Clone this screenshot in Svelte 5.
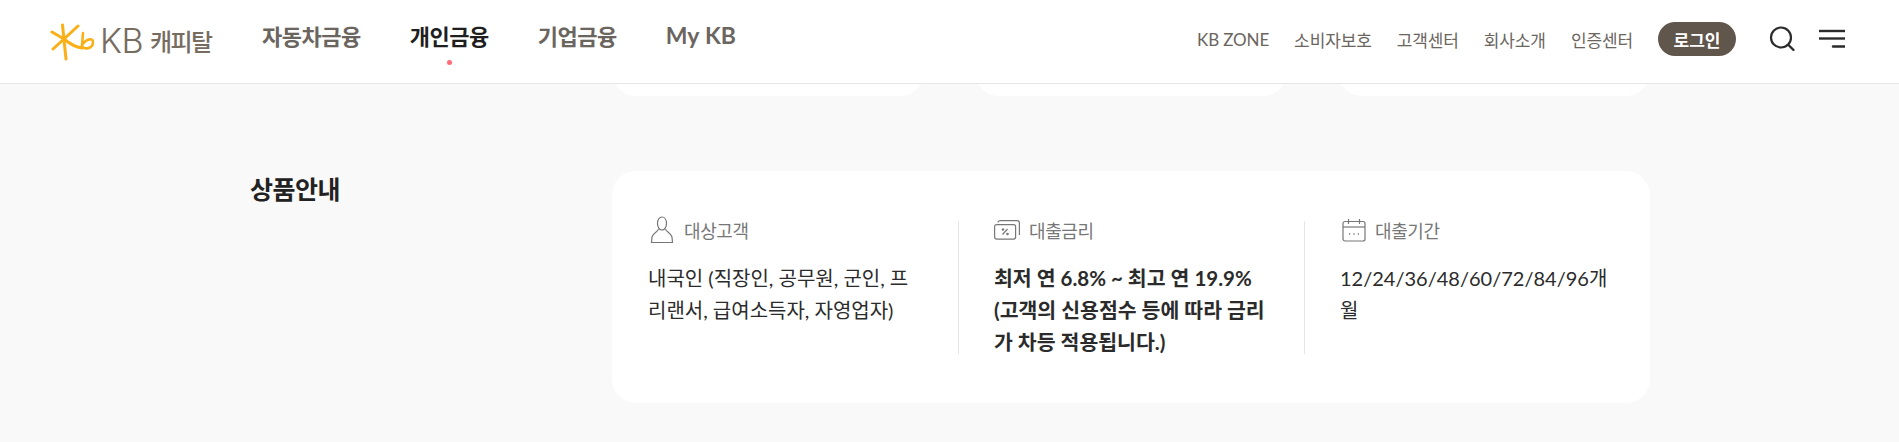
<script>
	const nav = [
		{ label: "자동차금융" },
		{ label: "개인금융", active: true },
		{ label: "기업금융" },
		{ label: "My KB", latin: true }
	];
	const util = ["KB ZONE", "소비자보호", "고객센터", "회사소개", "인증센터"];
</script>

<header class="header">
	<a class="logo" href="#home" aria-label="KB 캐피탈">
		<svg class="logo-mark" width="44" height="42" viewBox="0 0 44 42" fill="none" stroke="#fbaf17" stroke-linecap="round" stroke-linejoin="round">
			<path d="M12.5 5 L16 39" stroke-width="3" />
			<path d="M2 12 L14 19 L28 6" stroke-width="3" />
			<path d="M3 29 L14 19 C20 24 25 27 32 28" stroke-width="3" />
			<path d="M33 13 L32 26 C34 30 43 29 43 22 C43 18 37 18 32 25" stroke-width="2.6" />
		</svg>
		<span class="logo-kb">KB</span>
		<span class="logo-name">캐피탈</span>
	</a>

	<nav class="nav">
		{#each nav as item}
			<a class="nav-item" class:active={item.active} class:latin={item.latin} href="#menu">{item.label}</a>
		{/each}
	</nav>

	<div class="util">
		{#each util as item}
			<a class="util-item" href="#util">{item}</a>
		{/each}
		<button class="login" type="button">로그인</button>
		<svg class="search" width="28" height="28" viewBox="0 0 28 28" fill="none" stroke="#2b2b2b" stroke-linecap="round">
			<circle cx="13" cy="12.5" r="10" stroke-width="2.2" />
			<path d="M21 20.5 L25.5 25" stroke-width="2.4" />
		</svg>
		<svg class="menu" width="26" height="20" viewBox="0 0 26 20" fill="none" stroke="#2b2b2b" stroke-width="2.4">
			<path d="M0 2 H26" />
			<path d="M0 9.5 H26" />
			<path d="M14 17.5 H26" stroke-linecap="round" />
		</svg>
	</div>
</header>

<main class="page">
	<div class="stubs">
		<div class="stub"></div>
		<div class="stub"></div>
		<div class="stub"></div>
	</div>

	<section class="info">
		<h2 class="info-title">상품안내</h2>
		<div class="card">
			<div class="col">
				<div class="col-label">
					<svg class="icon-person" width="24" height="28" viewBox="0 0 24 28" fill="none" stroke="#777" stroke-width="1.2">
						<path d="M7.5 7.5 C7.5 3.5 9.5 1 12 1 C14.5 1 16.5 3.5 16.5 7.5 C16.5 11 14.5 14 12 14 C9.5 14 7.5 11 7.5 7.5 Z" />
						<path d="M8.5 13 C8 16 3 16.5 2 21 L1.5 26.5 H22.5 L22 21 C21 16.5 16 16 15.5 13" />
					</svg>
					<span>대상고객</span>
				</div>
				<p class="col-text">내국인 (직장인, 공무원, 군인, 프리랜서, 급여소득자, 자영업자)</p>
			</div>
			<div class="col">
				<div class="col-label">
					<svg class="icon-rate" width="26" height="20" viewBox="0 0 26 20" fill="none" stroke="#777" stroke-width="1.2">
						<rect x="0.6" y="4.6" width="21" height="14.5" rx="2" />
						<path d="M4 2.5 C4 1.3 5 0.7 6 0.7 H23 C24.5 0.7 25.4 1.6 25.4 3 V15" />
						<path d="M8.5 14.5 L13.5 9" />
						<circle cx="9" cy="9.5" r="0.7" />
						<circle cx="13.5" cy="14" r="0.7" />
					</svg>
					<span>대출금리</span>
				</div>
				<p class="col-text strong">최저 연 6.8% ~ 최고 연 19.9%<br />(고객의 신용점수 등에 따라 금리가 차등 적용됩니다.)</p>
			</div>
			<div class="col">
				<div class="col-label">
					<svg class="icon-cal" width="24" height="24" viewBox="0 0 24 24" fill="none" stroke="#777" stroke-width="1.2">
						<rect x="1" y="3.5" width="22" height="19.5" rx="2" />
						<path d="M1 9 H23" />
						<path d="M6.5 1 V6" />
						<path d="M17.5 1 V6" />
						<path d="M7 16 H8.2 M11.4 16 H12.6 M15.8 16 H17" stroke-width="1.6" />
					</svg>
					<span>대출기간</span>
				</div>
				<p class="col-text">12/24/36/48/60/72/84/96개월</p>
			</div>
		</div>
	</section>
</main>

<style>
	:global(body) {
		margin: 0;
		background: #f9f9f9;
		font-family: Lato, "Noto Sans CJK KR", sans-serif;
		color: #2b2b2b;
	}

	a {
		text-decoration: none;
		color: inherit;
	}

	.header {
		position: relative;
		display: flex;
		align-items: center;
		height: 83px;
		padding: 0 54px 0 50px;
		background: #fff;
		border-bottom: 1px solid #e6e6e6;
	}

	.logo {
		display: flex;
		align-items: center;
		width: 212px;
		padding-bottom: 2px;
		color: #766c60;
	}

	.logo-mark {
		margin-right: 6px;
	}

	.logo-kb {
		font-family: Inter, sans-serif;
		font-weight: 300;
		font-size: 34px;
		letter-spacing: -0.5px;
	}

	.logo-name {
		margin-left: 7px;
		font-size: 24px;
		font-weight: 500;
		letter-spacing: -1.6px;
	}

	.nav {
		display: flex;
		align-items: center;
		gap: 49px;
		padding-bottom: 13px;
	}

	.nav-item {
		position: relative;
		font-size: 22px;
		font-weight: 700;
		letter-spacing: -0.5px;
		color: #6b6560;
	}

	.nav-item.latin {
		font-size: 23px;
		letter-spacing: 0.2px;
	}

	.nav-item.active {
		color: #1f1f1f;
	}

	.nav-item.active::after {
		content: "";
		position: absolute;
		left: 50%;
		bottom: -14px;
		width: 5px;
		height: 5px;
		margin-left: -2.5px;
		border-radius: 50%;
		background: #ff6b76;
	}

	.util {
		display: flex;
		align-items: center;
		margin-left: auto;
		padding-bottom: 5px;
	}

	.util-item {
		margin-right: 25px;
		font-size: 17px;
		letter-spacing: -0.12px;
		color: #6b6560;
	}

	.login {
		width: 78px;
		height: 34px;
		margin-right: 32px;
		padding: 0;
		border: 0;
		border-radius: 17px;
		background: #60564b;
		color: #fff;
		font-family: inherit;
		font-size: 17px;
		font-weight: 700;
	}

	.search {
		margin-right: 23px;
	}

	.stubs {
		display: grid;
		grid-template-columns: repeat(3, 312px);
		justify-content: space-between;
		width: 1038px;
		margin-top: -24px;
		margin-left: 612px;
	}

	.stub {
		height: 36px;
		border-radius: 0 0 24px 24px;
		background: #fff;
	}

	.info {
		display: flex;
		padding: 75px 0 39px 250px;
	}

	.info-title {
		width: 362px;
		margin: -1px 0 0;
		font-size: 25px;
		font-weight: 700;
		letter-spacing: -0.5px;
		color: #222;
	}

	.card {
		display: grid;
		grid-template-columns: 347px 346px 345px;
		padding: 50px 0 49px;
		border-radius: 24px;
		background: #fff;
	}

	.col {
		height: 133px;
		padding: 0 36px 0 35px;
		box-sizing: border-box;
		border-right: 1px solid #e6e6e6;
	}

	.col:first-child {
		padding-left: 36px;
	}

	.col:last-child {
		border-right: 0;
	}

	.col-label {
		display: flex;
		align-items: center;
		gap: 8px;
		height: 18px;
		font-size: 18px;
		letter-spacing: -0.4px;
		color: #777;
	}

	.icon-person {
		margin: 0 2px 0 2px;
	}

	.icon-rate {
		margin-right: 1px;
	}

	.icon-cal {
		margin: 0 1px 0 2px;
	}

	.col-text {
		margin: 23px 0 0;
		font-size: 20px;
		line-height: 32px;
		word-break: break-all;
		color: #2b2b2b;
	}

	.strong {
		font-size: 20.5px;
		font-weight: 700;
	}
</style>
